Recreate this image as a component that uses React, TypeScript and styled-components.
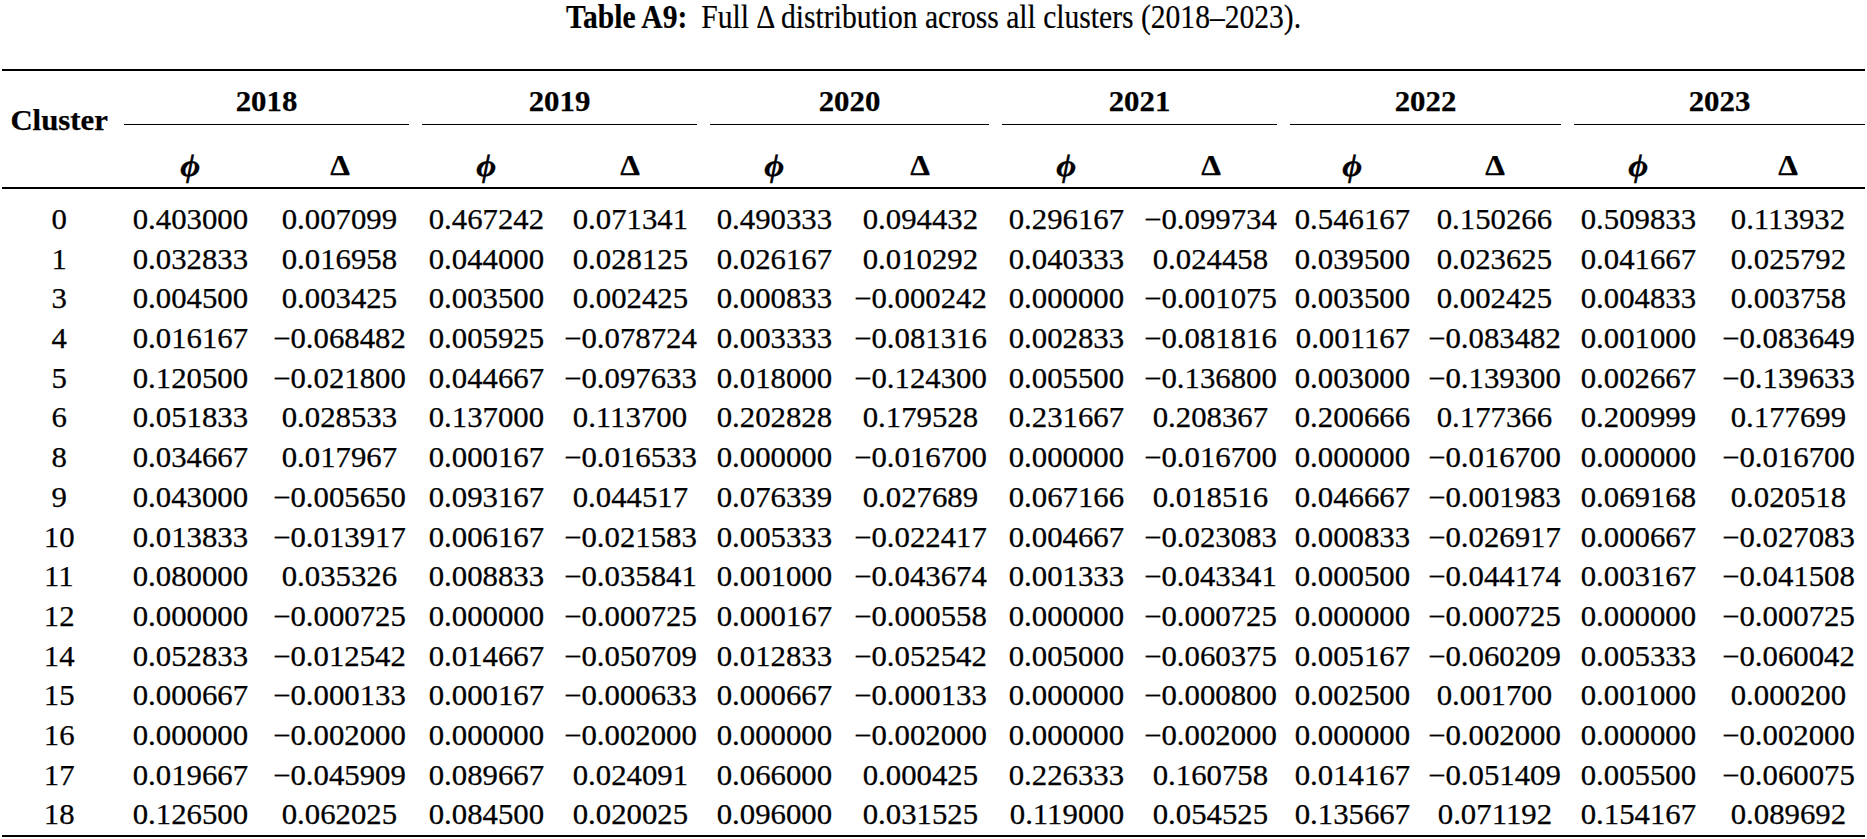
import React from "react";
import styled, { createGlobalStyle } from "styled-components";

const GlobalStyle = createGlobalStyle`
  html, body {
    margin: 0;
    padding: 0;
    background: #ffffff;
  }
  body {
    font-family: "Liberation Serif", "DejaVu Serif", serif;
    color: #000000;
  }
`;

const COL_WIDTHS = [114, 149.5, 148.5, 145, 142.5, 145, 147.5, 145.5, 142.5, 141.5, 142.5, 145.5, 153.5];
const COLS = COL_WIDTHS.map((w) => `${w}px`).join(" ");
const STRETCH = 1.08;

const Page = styled.div`
  width: 1867px;
  padding: 0 2px;
  box-sizing: border-box;
`;

const Caption = styled.div`
  height: 69px;
  display: flex;
  justify-content: center;
  align-items: flex-start;
  font-size: 34px;
  line-height: 34px;
  white-space: nowrap;
`;

const CaptionText = styled.span`
  display: inline-block;
  transform: scaleX(0.87);
  transform-origin: 50% 50%;
  -webkit-text-stroke: 0.2px #000;
`;

const CaptionLabel = styled.span`
  font-weight: bold;
  margin-right: 16px;
`;

const Table = styled.div`
  border-top: 2px solid #000;
  border-bottom: 2.5px solid #000;
  font-size: 28.5px;
  line-height: 34px;
`;

const Head = styled.div`
  display: grid;
  grid-template-columns: ${COLS};
  grid-template-rows: 54px 62px;
  font-weight: bold;
`;

const ClusterHead = styled.div`
  grid-row: 1 / span 2;
  grid-column: 1;
  display: flex;
  justify-content: center;
  align-items: flex-start;
  padding-top: 33px;
`;

const YearHead = styled.div<{ $last?: boolean }>`
  grid-row: 1;
  grid-column: span 2;
  display: flex;
  justify-content: center;
  align-items: flex-start;
  padding-top: 14px;
  margin: 0 ${(p) => (p.$last ? 0 : 5)}px 0 8px;
  border-bottom: 1.5px solid #000;
  box-sizing: border-box;
`;

const SubHead = styled.div<{ $italic?: boolean }>`
  grid-row: 2;
  display: flex;
  justify-content: center;
  align-items: flex-start;
  padding-top: 23px;
  font-style: ${(p) => (p.$italic ? "italic" : "normal")};
  font-size: ${(p) => (p.$italic ? 32 : 29)}px;
`;

const MidRule = styled.div`
  height: 2px;
  background: #000;
`;

const Body = styled.div`
  display: grid;
  grid-template-columns: ${COLS};
  grid-auto-rows: 39.7px;
  padding-top: 11px;
`;

const Cell = styled.div`
  display: flex;
  justify-content: center;
  align-items: center;
  line-height: 39.7px;
  white-space: nowrap;
`;

const Wide = styled.span`
  display: inline-block;
  transform: scaleX(${STRETCH});
  transform-origin: 50% 50%;
  -webkit-text-stroke: 0.25px #000;
`;

const YEARS = ["2018", "2019", "2020", "2021", "2022", "2023"];

const ROWS: [string, string[]][] = [
  ["0", ["0.403000", "0.007099", "0.467242", "0.071341", "0.490333", "0.094432", "0.296167", "−0.099734", "0.546167", "0.150266", "0.509833", "0.113932"]],
  ["1", ["0.032833", "0.016958", "0.044000", "0.028125", "0.026167", "0.010292", "0.040333", "0.024458", "0.039500", "0.023625", "0.041667", "0.025792"]],
  ["3", ["0.004500", "0.003425", "0.003500", "0.002425", "0.000833", "−0.000242", "0.000000", "−0.001075", "0.003500", "0.002425", "0.004833", "0.003758"]],
  ["4", ["0.016167", "−0.068482", "0.005925", "−0.078724", "0.003333", "−0.081316", "0.002833", "−0.081816", "0.001167", "−0.083482", "0.001000", "−0.083649"]],
  ["5", ["0.120500", "−0.021800", "0.044667", "−0.097633", "0.018000", "−0.124300", "0.005500", "−0.136800", "0.003000", "−0.139300", "0.002667", "−0.139633"]],
  ["6", ["0.051833", "0.028533", "0.137000", "0.113700", "0.202828", "0.179528", "0.231667", "0.208367", "0.200666", "0.177366", "0.200999", "0.177699"]],
  ["8", ["0.034667", "0.017967", "0.000167", "−0.016533", "0.000000", "−0.016700", "0.000000", "−0.016700", "0.000000", "−0.016700", "0.000000", "−0.016700"]],
  ["9", ["0.043000", "−0.005650", "0.093167", "0.044517", "0.076339", "0.027689", "0.067166", "0.018516", "0.046667", "−0.001983", "0.069168", "0.020518"]],
  ["10", ["0.013833", "−0.013917", "0.006167", "−0.021583", "0.005333", "−0.022417", "0.004667", "−0.023083", "0.000833", "−0.026917", "0.000667", "−0.027083"]],
  ["11", ["0.080000", "0.035326", "0.008833", "−0.035841", "0.001000", "−0.043674", "0.001333", "−0.043341", "0.000500", "−0.044174", "0.003167", "−0.041508"]],
  ["12", ["0.000000", "−0.000725", "0.000000", "−0.000725", "0.000167", "−0.000558", "0.000000", "−0.000725", "0.000000", "−0.000725", "0.000000", "−0.000725"]],
  ["14", ["0.052833", "−0.012542", "0.014667", "−0.050709", "0.012833", "−0.052542", "0.005000", "−0.060375", "0.005167", "−0.060209", "0.005333", "−0.060042"]],
  ["15", ["0.000667", "−0.000133", "0.000167", "−0.000633", "0.000667", "−0.000133", "0.000000", "−0.000800", "0.002500", "0.001700", "0.001000", "0.000200"]],
  ["16", ["0.000000", "−0.002000", "0.000000", "−0.002000", "0.000000", "−0.002000", "0.000000", "−0.002000", "0.000000", "−0.002000", "0.000000", "−0.002000"]],
  ["17", ["0.019667", "−0.045909", "0.089667", "0.024091", "0.066000", "0.000425", "0.226333", "0.160758", "0.014167", "−0.051409", "0.005500", "−0.060075"]],
  ["18", ["0.126500", "0.062025", "0.084500", "0.020025", "0.096000", "0.031525", "0.119000", "0.054525", "0.135667", "0.071192", "0.154167", "0.089692"]],
];

export default function App() {
  return (
    <>
      <GlobalStyle />
      <Page>
        <Caption>
          <CaptionText>
            <CaptionLabel>Table A9:</CaptionLabel>
            Full Δ distribution across all clusters (2018–2023).
          </CaptionText>
        </Caption>
        <Table>
          <Head>
            <ClusterHead>
              <Wide>Cluster</Wide>
            </ClusterHead>
            {YEARS.map((y, i) => (
              <YearHead key={y} $last={i === YEARS.length - 1}>
                <Wide>{y}</Wide>
              </YearHead>
            ))}
            {YEARS.map((y) => (
              <React.Fragment key={`s-${y}`}>
                <SubHead $italic>
                  <Wide>ϕ</Wide>
                </SubHead>
                <SubHead>
                  <Wide>Δ</Wide>
                </SubHead>
              </React.Fragment>
            ))}
          </Head>
          <MidRule />
          <Body>
            {ROWS.map(([id, vals]) => (
              <React.Fragment key={id}>
                <Cell>
                  <Wide>{id}</Wide>
                </Cell>
                {vals.map((v, j) => (
                  <Cell key={j}>
                    <Wide>{v}</Wide>
                  </Cell>
                ))}
              </React.Fragment>
            ))}
          </Body>
        </Table>
      </Page>
    </>
  );
}
